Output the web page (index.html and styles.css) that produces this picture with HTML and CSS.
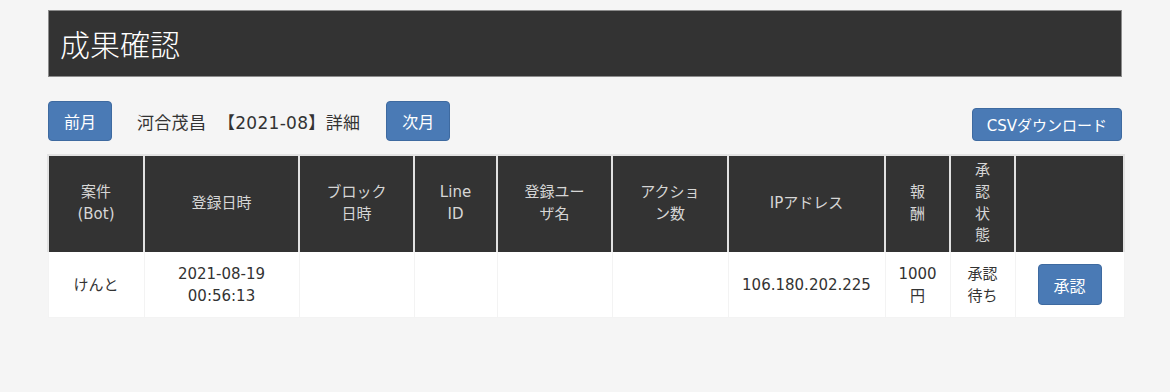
FILE: index.html
```html
<!DOCTYPE html>
<html lang="ja">
<head>
<meta charset="utf-8">
<link rel="stylesheet" href="styles.css">
</head>
<body>
<div class="page">
  <h1 class="title">成果確認</h1>
  <div class="toolbar">
    <div class="nav">
      <button class="btn btn-nav">前月</button>
      <span class="period">河合茂昌 【2021-08】詳細</span>
      <button class="btn btn-nav">次月</button>
    </div>
    <button class="btn btn-csv">CSVダウンロード</button>
  </div>
  <table class="result">
    <colgroup>
      <col class="c1"><col class="c2"><col class="c3"><col class="c4"><col class="c5">
      <col class="c6"><col class="c7"><col class="c8"><col class="c9"><col class="c10">
    </colgroup>
    <thead>
      <tr>
        <th>案件<br>(Bot)</th>
        <th>登録日時</th>
        <th>ブロック<br>日時</th>
        <th>Line<br>ID</th>
        <th>登録ユー<br>ザ名</th>
        <th>アクショ<br>ン数</th>
        <th>IPアドレス</th>
        <th>報<br>酬</th>
        <th>承<br>認<br>状<br>態</th>
        <th></th>
      </tr>
    </thead>
    <tbody>
      <tr>
        <td>けんと</td>
        <td>2021-08-19<br>00:56:13</td>
        <td></td>
        <td></td>
        <td></td>
        <td></td>
        <td>106.180.202.225</td>
        <td>1000<br>円</td>
        <td>承認<br>待ち</td>
        <td><button class="btn btn-approve">承認</button></td>
      </tr>
    </tbody>
  </table>
</div>
</body>
</html>
```

FILE: styles.css
```css
html, body {
  margin: 0;
  padding: 0;
  background: #f5f5f5;
}

body {
  font-family: "DejaVu Sans", "Noto Sans CJK JP", sans-serif;
  color: #333;
}

.page {
  width: 1074px;
  padding: 10px 0 0 48px;
}

.title {
  margin: 0;
  height: 65px;
  background: #333;
  border: 1px solid #8c8c8c;
  color: #fff;
  font-family: "Noto Sans CJK JP", sans-serif;
  font-size: 30px;
  font-weight: 300;
  line-height: 65px;
  padding-left: 11px;
}

.toolbar {
  display: flex;
  justify-content: space-between;
  align-items: flex-end;
  margin-top: 24px;
  margin-bottom: 13px;
}

.nav {
  display: flex;
  align-items: center;
}

.btn {
  font-family: "DejaVu Sans", "Noto Sans CJK JP", sans-serif;
  background: #4a7ab5;
  border: 1px solid #3e6aa0;
  border-radius: 4px;
  color: #fff;
  padding: 0;
  cursor: pointer;
}

.btn-nav {
  width: 64px;
  height: 40px;
  font-size: 16px;
}

.period {
  font-size: 17px;
  margin: 0 26px 0 25px;
  color: #333;
  word-spacing: 6px;
  letter-spacing: 0.3px;
}

.btn-csv {
  width: 150px;
  height: 33px;
  font-size: 15px;
}

.result {
  width: 1076px;
  margin-left: -1px;
  table-layout: fixed;
  border-collapse: collapse;
  font-size: 15px;
}

.c1 { width: 96px; }
.c2 { width: 155px; }
.c3 { width: 115px; }
.c4 { width: 83px; }
.c5 { width: 115px; }
.c6 { width: 116px; }
.c7 { width: 157px; }
.c8 { width: 65px; }
.c9 { width: 65px; }
.c10 { width: 109px; }

.result th {
  background: #333;
  color: #d6d6d6;
  font-weight: 400;
  height: 95px;
  line-height: 21.7px;
  padding: 0;
  border: 2px solid #e2e2e2;
  border-bottom: 1px solid #333;
  vertical-align: middle;
  text-align: center;
}

.result td {
  background: #fff;
  height: 65px;
  line-height: 22px;
  padding: 0;
  border: 1px solid #f3f3f3;
  border-top: none;
  vertical-align: middle;
  text-align: center;
  color: #333;
}

.btn-approve {
  width: 64px;
  height: 41px;
  font-size: 16px;
}
```
